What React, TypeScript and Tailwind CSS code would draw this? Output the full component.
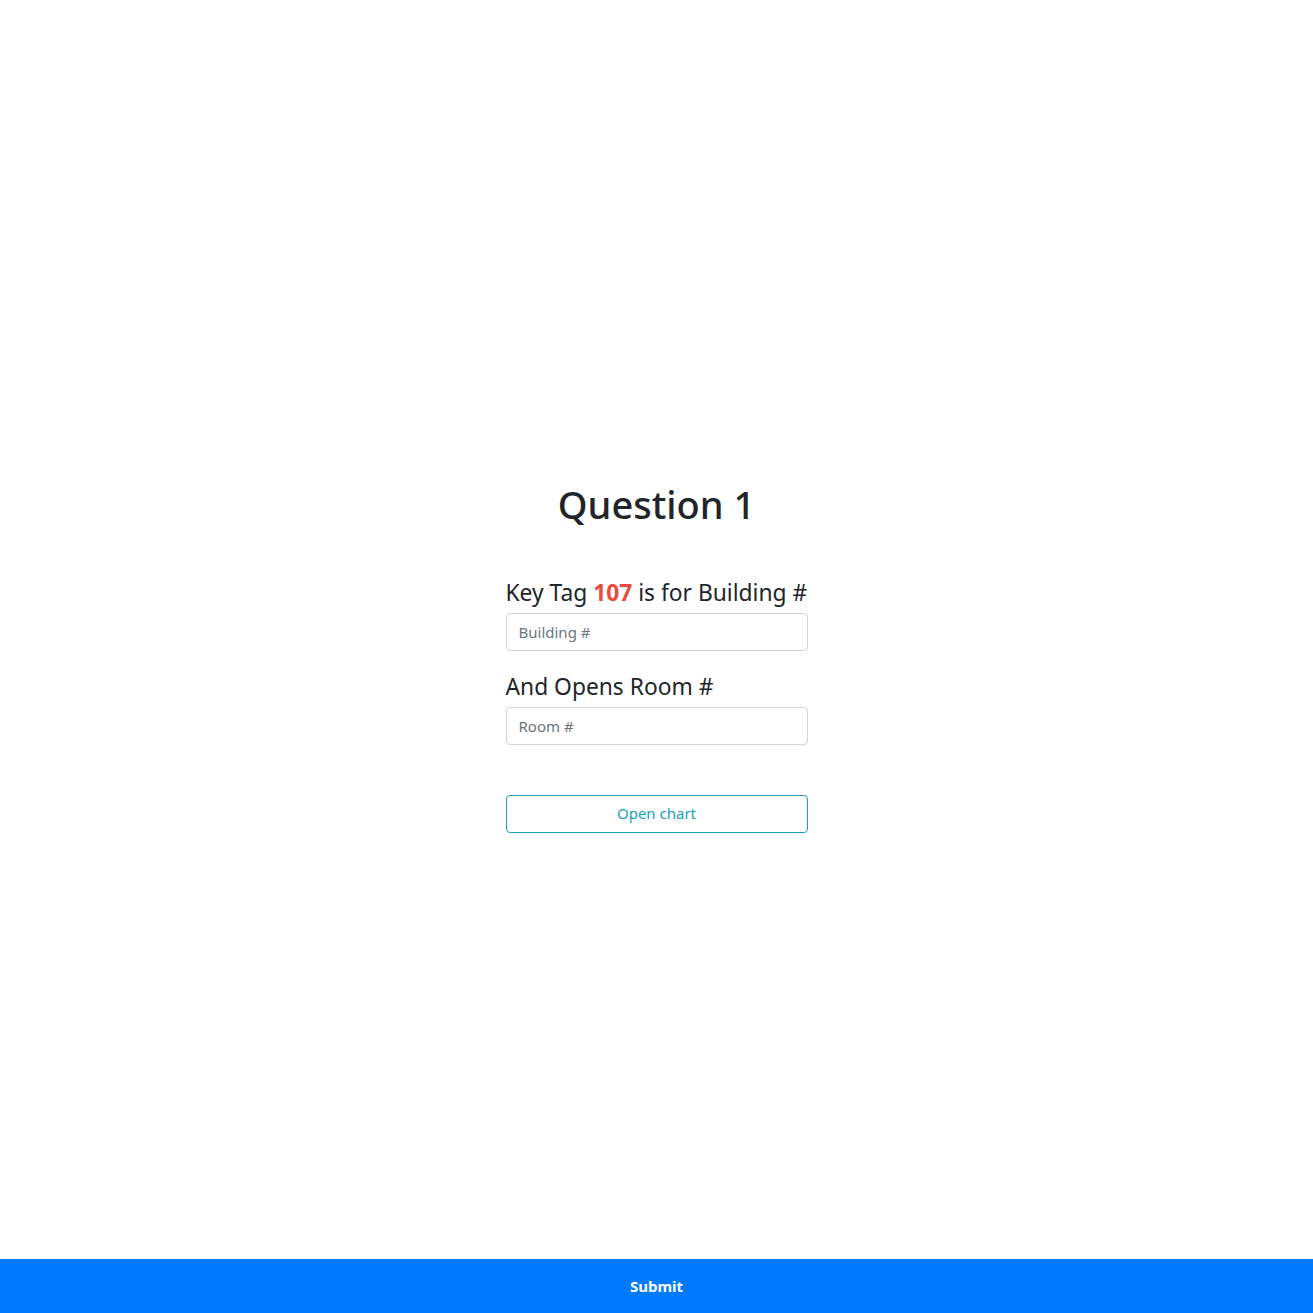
export default function App() {
  const font = { fontFamily: '"Noto Sans", "Open Sans", sans-serif' };
  return (
    <div className="relative h-screen w-full bg-white text-[#212529]" style={font}>
      <div className="flex h-full w-full items-center justify-center">
        <div className="flex w-[302px] flex-col">
          <h1 className="text-center text-[38px] font-medium leading-[46px] text-[#212529]">Question 1</h1>
          <label className="mt-[52px] block text-[22.8px] leading-[28px] whitespace-nowrap">
            Key Tag <span className="font-bold text-[#e74c3c]">107</span> is for Building #
          </label>
          <input
            className="mt-[6px] h-[38px] w-full rounded-[4px] border border-[#ced4da] px-3 text-[15px] text-[#495057] placeholder-[#6c757d] outline-none"
            placeholder="Building #"
          />
          <label className="mt-[22px] block text-[22.8px] leading-[28px]">And Opens Room #</label>
          <input
            className="mt-[6px] h-[38px] w-full rounded-[4px] border border-[#ced4da] px-3 text-[15px] text-[#495057] placeholder-[#6c757d] outline-none"
            placeholder="Room #"
          />
          <button className="mt-[50px] h-[38px] w-full rounded-[4px] border border-[#17a2b8] bg-white text-[15px] text-[#17a2b8]">
            Open chart
          </button>
        </div>
      </div>
      <div className="absolute bottom-0 left-0 flex h-[54px] w-full items-center justify-center bg-[#007bff]">
        <span className="text-[15px] font-bold text-white">Submit</span>
      </div>
    </div>
  );
}
